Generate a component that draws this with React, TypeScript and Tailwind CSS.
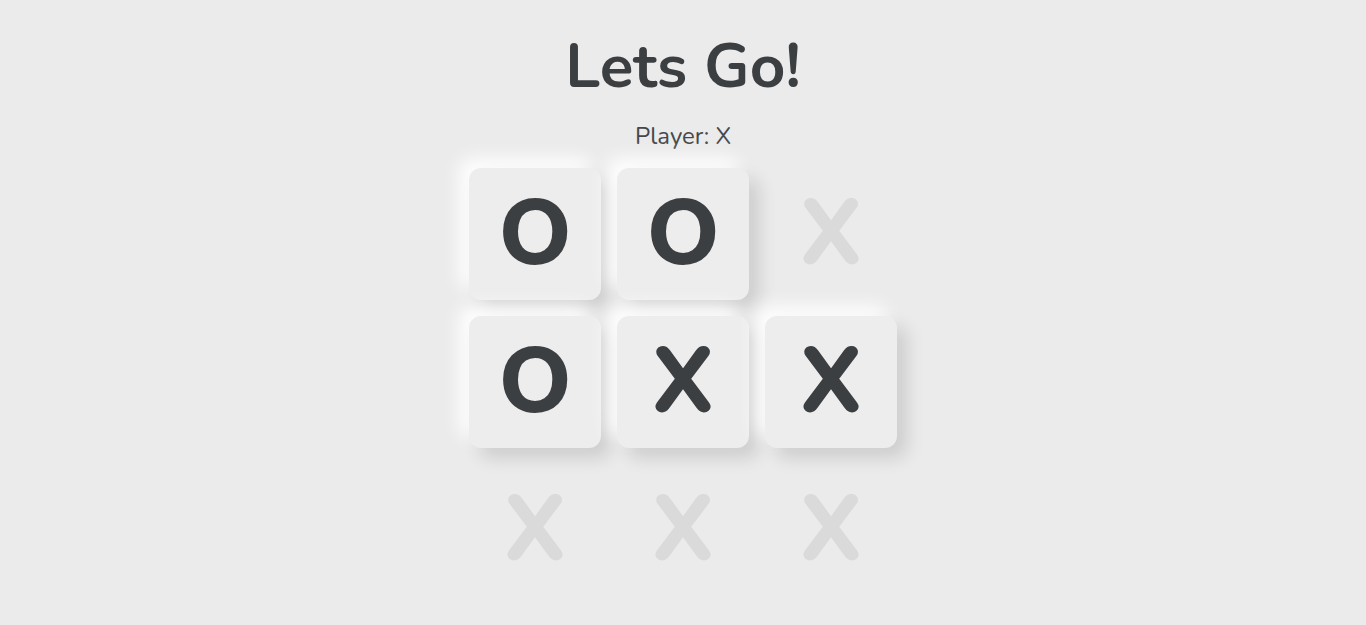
import React from 'react';

type Mark = 'X' | 'O' | null;

const board: Mark[] = ['O', 'O', null, 'O', 'X', 'X', null, null, null];

const Cell: React.FC<{ value: Mark; preview: string }> = ({ value, preview }) => {
  if (!value) {
    return (
      <div className="w-[132px] h-[132px] flex items-center justify-center text-[92px] font-extrabold leading-none text-[#dadada] select-none">
        {preview}
      </div>
    );
  }
  return (
    <div className="w-[132px] h-[132px] rounded-xl bg-[#ededed] flex items-center justify-center text-[92px] font-extrabold leading-none text-[#3c3f42] shadow-[10px_10px_18px_rgba(0,0,0,0.13),-10px_-10px_18px_rgba(255,255,255,0.95)]">
      {value}
    </div>
  );
};

export default function App() {
  return (
    <div
      className="min-h-screen w-full bg-[#ebebeb] flex flex-col items-center text-[#3c3f42]"
      style={{ fontFamily: 'Nunito, Lato, "Noto Sans", sans-serif' }}
    >
      <h1 className="mt-[35px] text-[62px] leading-[64px] font-bold">Lets Go!</h1>
      <p className="mt-[25px] text-[24px] leading-[24px] text-[#45484b]">Player: X</p>
      <div className="mt-[20px] grid grid-cols-3 gap-4">
        {board.map((v, i) => (
          <Cell key={i} value={v} preview="X" />
        ))}
      </div>
    </div>
  );
}
